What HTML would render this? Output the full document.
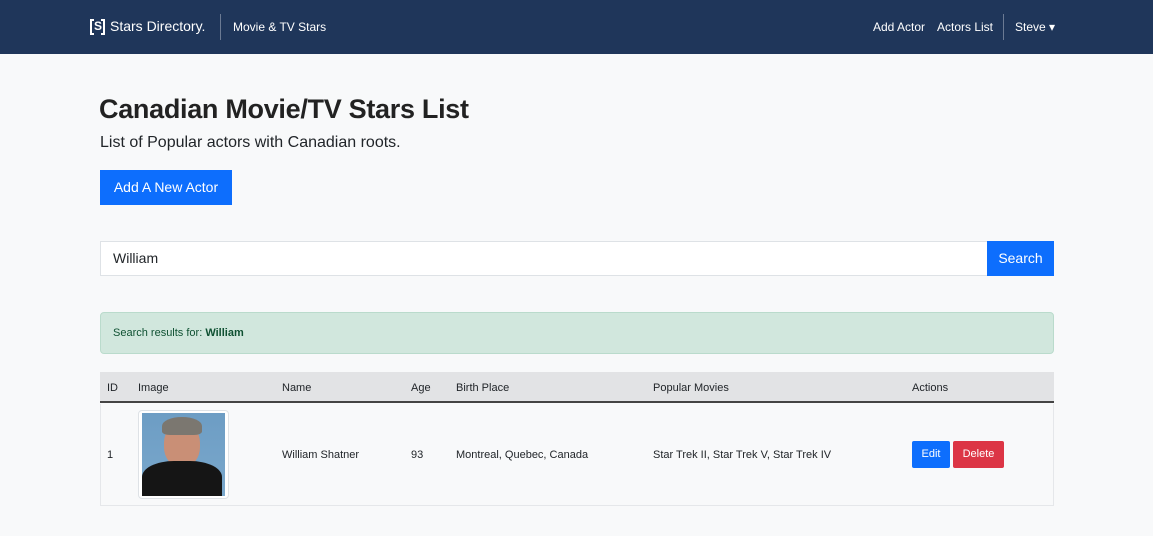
<!DOCTYPE html>
<html><head><style>
*{box-sizing:border-box;margin:0;padding:0}
body{width:1153px;height:536px;background:#f8f9fa;font-family:"Liberation Sans",sans-serif;color:#212529;position:relative;overflow:hidden}
.nav{position:absolute;top:0;left:0;width:1153px;height:54px;background:#1f365a;color:#fff}
.nav span{position:absolute;font-size:12px;top:20px}
.abs{position:absolute}
</style></head><body>
<div class="nav">
<div class="abs" style="left:90px;top:19px;width:15px;height:16px;border:2px solid #fff;border-top-width:0;border-bottom-width:0;"></div>
<div class="abs" style="left:90px;top:19px;width:4px;height:2px;background:#fff"></div><div class="abs" style="left:101px;top:19px;width:4px;height:2px;background:#fff"></div>
<div class="abs" style="left:90px;top:33px;width:4px;height:2px;background:#fff"></div><div class="abs" style="left:101px;top:33px;width:4px;height:2px;background:#fff"></div>
<div class="abs" style="left:94px;top:19px;font-size:12px;font-weight:bold;color:#fff">S</div>
<span style="left:110px;font-size:14px;top:18px">Stars Directory.</span>
<div class="abs" style="left:220px;top:14px;width:1px;height:26px;background:#6b7a93"></div>
<span style="left:233px">Movie &amp; TV Stars</span>
<span style="left:873px">Add Actor</span>
<span style="left:937px">Actors List</span>
<div class="abs" style="left:1003px;top:14px;width:1px;height:26px;background:#6b7a93"></div>
<span style="left:1015px">Steve ▾</span>
</div>
<div class="abs" style="left:99px;top:94px;font-size:27px;font-weight:bold;letter-spacing:-0.3px;color:#222">Canadian Movie/TV Stars List</div>
<div class="abs" style="left:100px;top:134px;font-size:16px">List of Popular actors with Canadian roots.</div>
<div class="abs" style="left:100px;top:170px;width:132px;height:35px;background:#0d6efd;color:#fff;font-size:14px;line-height:35px;text-align:center">Add A New Actor</div>
<div class="abs" style="left:100px;top:241px;width:888px;height:35px;background:#fff;border:1px solid #dee2e6;font-size:14px;line-height:33px;padding-left:12px">William</div>
<div class="abs" style="left:987px;top:241px;width:67px;height:35px;background:#0d6efd;color:#fff;font-size:14px;line-height:35px;text-align:center">Search</div>
<div class="abs" style="left:100px;top:312px;width:954px;height:42px;background:#d1e7dd;border:1px solid #badbcc;border-radius:4px;font-size:11px;line-height:40px;padding-left:12px;color:#0f5132">Search results for: <b>William</b></div>
<div class="abs" style="left:100px;top:372px;width:954px;height:31px;background:#e2e3e5;border-bottom:2px solid #444"></div>
<div class="abs" style="left:100px;top:404px;width:954px;height:102px;border:1px solid #e5e7ea;border-top:none"></div>
<div class="abs" style="font-size:11px;top:382px;left:107px">ID</div>
<div class="abs" style="font-size:11px;top:382px;left:138px">Image</div>
<div class="abs" style="font-size:11px;top:382px;left:282px">Name</div>
<div class="abs" style="font-size:11px;top:382px;left:411px">Age</div>
<div class="abs" style="font-size:11px;top:382px;left:456px">Birth Place</div>
<div class="abs" style="font-size:11px;top:382px;left:653px">Popular Movies</div>
<div class="abs" style="font-size:11px;top:382px;left:912px">Actions</div>
<div class="abs" style="left:138px;top:410px;width:91px;height:89px;border:1px solid #dee2e6;border-radius:4px;background:#fff"></div>
<div class="abs" style="left:142px;top:413px;width:83px;height:83px;background:linear-gradient(#6d9dc4,#7aa8cc);overflow:hidden">
<div class="abs" style="left:22px;top:10px;width:36px;height:44px;border-radius:45%;background:#c98f76"></div>
<div class="abs" style="left:20px;top:4px;width:40px;height:18px;border-radius:50% 50% 20% 20%;background:#7b7770"></div>
<div class="abs" style="left:0px;top:48px;width:80px;height:40px;border-radius:40% 40% 0 0;background:#151515"></div>
</div>
<div class="abs" style="font-size:11px;top:449px;left:107px">1</div>
<div class="abs" style="font-size:11px;top:449px;left:282px">William Shatner</div>
<div class="abs" style="font-size:11px;top:449px;left:411px">93</div>
<div class="abs" style="font-size:11px;top:449px;left:456px">Montreal, Quebec, Canada</div>
<div class="abs" style="font-size:11px;top:449px;left:653px">Star Trek II, Star Trek V, Star Trek IV</div>
<div class="abs" style="left:912px;top:441px;width:38px;height:27px;background:#0d6efd;color:#fff;font-size:11px;line-height:27px;text-align:center;border-radius:2px">Edit</div>
<div class="abs" style="left:953px;top:441px;width:51px;height:27px;background:#dc3545;color:#fff;font-size:11px;line-height:27px;text-align:center;border-radius:2px">Delete</div>
</body></html>
